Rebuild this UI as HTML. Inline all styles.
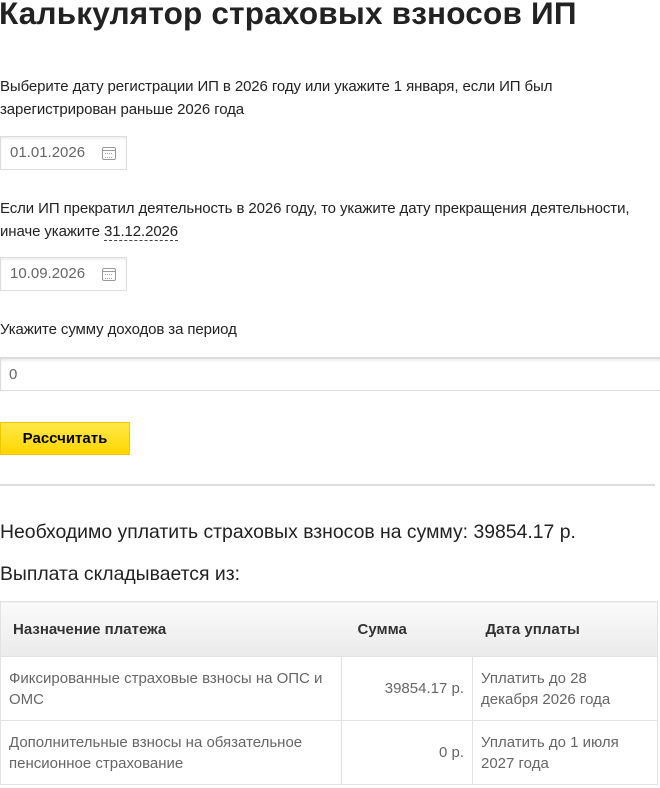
<!DOCTYPE html>
<html><head><meta charset="utf-8"><style>
*{margin:0;padding:0;box-sizing:border-box}
body{width:660px;height:788px;overflow:hidden;background:#fff;font-family:"Liberation Sans","Noto Sans CJK SC",sans-serif;color:#222;position:relative}
.a{position:absolute;white-space:nowrap}
h1{position:absolute;left:-1px;top:-5px;font-size:31.5px;font-weight:bold;color:#222;letter-spacing:0.2px;white-space:nowrap}
.p{font-size:15px;line-height:23px;color:#222;letter-spacing:-0.1px}
.inp{position:absolute;border:1px solid #ddd;box-shadow:inset 0 2px 2px #eee;background:#fff;font-size:15px;color:#666}
.cal{position:absolute;right:10px;top:10px;width:14px;height:13px;border:1.5px solid #999;border-radius:2px}
.cal:before{content:"";position:absolute;left:0;right:0;top:2px;border-top:1.5px solid #999}
.cal:after{content:"";position:absolute;left:2px;top:5px;width:7px;height:3px;border-top:1.5px dotted #aaa;border-bottom:1.5px dotted #aaa}
table{position:absolute;left:0;top:601px;width:658px;border-collapse:collapse;font-size:15px;border:1px solid #e2e2e2;table-layout:fixed}
th{background:linear-gradient(#fafafa,#ebebeb);height:55px;text-align:left;font-weight:bold;color:#333;padding-left:12px;white-space:nowrap}
td{border:1px solid #e2e2e2;color:#666;line-height:21px;padding:0 8px;height:64px;vertical-align:middle;white-space:nowrap}
</style></head><body>
<h1>Калькулятор страховых взносов ИП</h1>
<div class="a p" style="left:0;top:75px">Выберите дату регистрации ИП в 2026 году или укажите 1 января, если ИП был<br>зарегистрирован раньше 2026 года</div>
<div class="inp" style="left:0;top:136px;width:127px;height:34px"><span class="a" style="left:9px;top:7px">01.01.2026</span><div class="cal"></div></div>
<div class="a p" style="left:0;top:197px">Если ИП прекратил деятельность в 2026 году, то укажите дату прекращения деятельности,<br>иначе укажите <span style="border-bottom:1px dashed #444">31.12.2026</span></div>
<div class="inp" style="left:0;top:257px;width:127px;height:34px"><span class="a" style="left:9px;top:7px">10.09.2026</span><div class="cal"></div></div>
<div class="a p" style="left:0;top:318px">Укажите сумму доходов за период</div>
<div class="inp" style="left:0;top:357px;width:662px;height:34px;border-top:2px solid #ddd"><span class="a" style="left:8px;top:7px">0</span></div>
<div class="a" style="left:0;top:422px;width:130px;height:33px;background:linear-gradient(#ffe94a,#ffd600);border:1px solid #f0c800;font-weight:bold;font-size:15px;color:#000;text-align:center;line-height:31px">Рассчитать</div>
<div class="a" style="left:0;top:484px;width:655px;border-top:2px solid #ddd"></div>
<div class="a" style="left:0;top:521px;font-size:19.4px;color:#222">Необходимо уплатить страховых взносов на сумму: 39854.17 р.</div>
<div class="a" style="left:0;top:563px;font-size:19.4px;color:#222">Выплата складывается из:</div>
<table>
<tr><th style="width:341px">Назначение платежа</th><th style="width:131px;padding-left:16px">Сумма</th><th style="padding-left:13px">Дата уплаты</th></tr>
<tr><td>Фиксированные страховые взносы на ОПС и<br>ОМС</td><td style="text-align:right">39854.17 р.</td><td>Уплатить до 28<br>декабря 2026 года</td></tr>
<tr><td>Дополнительные взносы на обязательное<br>пенсионное страхование</td><td style="text-align:right">0 р.</td><td>Уплатить до 1 июля<br>2027 года</td></tr>
</table>
</body></html>
